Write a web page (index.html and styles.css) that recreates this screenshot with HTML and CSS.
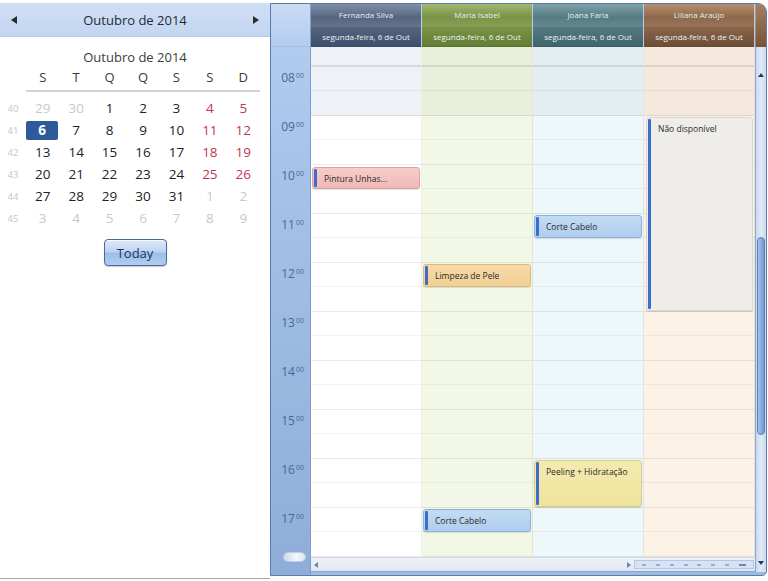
FILE: index.html
```html
<!DOCTYPE html>
<html lang="pt">
<head>
<meta charset="utf-8">
<title>Agenda</title>
<link rel="stylesheet" href="styles.css">
</head>
<body>
<div class="app">
  <aside class="nav">
    <div class="nav-head">
      <svg class="arrow" width="6" height="8" viewBox="0 0 6 8"><polygon points="6,0 6,8 0,4" fill="#2b2b2b"/></svg>
      <span class="nav-title">Outubro de 2014</span>
      <svg class="arrow" width="6" height="8" viewBox="0 0 6 8"><polygon points="0,0 0,8 6,4" fill="#2b2b2b"/></svg>
    </div>
    <div class="month-title">Outubro de 2014</div>
    <div class="cal">
      <div class="dow-row">
        <span>S</span><span>T</span><span>Q</span><span>Q</span><span>S</span><span>S</span><span>D</span>
      </div>
      <div class="week"><span class="wk">40</span><span class="d other">29</span><span class="d other">30</span><span class="d">1</span><span class="d">2</span><span class="d">3</span><span class="d we">4</span><span class="d we">5</span></div>
      <div class="week"><span class="wk">41</span><span class="d sel">6</span><span class="d">7</span><span class="d">8</span><span class="d">9</span><span class="d">10</span><span class="d we">11</span><span class="d we">12</span></div>
      <div class="week"><span class="wk">42</span><span class="d">13</span><span class="d">14</span><span class="d">15</span><span class="d">16</span><span class="d">17</span><span class="d we">18</span><span class="d we">19</span></div>
      <div class="week"><span class="wk">43</span><span class="d">20</span><span class="d">21</span><span class="d">22</span><span class="d">23</span><span class="d">24</span><span class="d we">25</span><span class="d we">26</span></div>
      <div class="week"><span class="wk">44</span><span class="d">27</span><span class="d">28</span><span class="d">29</span><span class="d">30</span><span class="d">31</span><span class="d other">1</span><span class="d other">2</span></div>
      <div class="week"><span class="wk">45</span><span class="d other">3</span><span class="d other">4</span><span class="d other">5</span><span class="d other">6</span><span class="d other">7</span><span class="d other">8</span><span class="d other">9</span></div>
    </div>
    <div class="today-wrap"><button class="today">Today</button></div>
  </aside>

  <section class="sched">
    <div class="times">
      <div class="corner"></div>
      <div class="t-pre"></div>
      <div class="t-hr">08<sup>00</sup></div>
      <div class="t-hr">09<sup>00</sup></div>
      <div class="t-hr">10<sup>00</sup></div>
      <div class="t-hr">11<sup>00</sup></div>
      <div class="t-hr">12<sup>00</sup></div>
      <div class="t-hr">13<sup>00</sup></div>
      <div class="t-hr">14<sup>00</sup></div>
      <div class="t-hr">15<sup>00</sup></div>
      <div class="t-hr">16<sup>00</sup></div>
      <div class="t-hr">17<sup>00</sup></div>
      <div class="zoom-pill"></div>
    </div>

    <div class="main">
      <div class="heads">
        <div class="res r-fern"><div class="res-name">Fernanda Silva</div><div class="res-date">segunda-feira, 6 de Out</div></div>
        <div class="res r-mari"><div class="res-name">Maria Isabel</div><div class="res-date">segunda-feira, 6 de Out</div></div>
        <div class="res r-joan"><div class="res-name">Joana Faria</div><div class="res-date">segunda-feira, 6 de Out</div></div>
        <div class="res r-lili"><div class="res-name">Liliana Araújo</div><div class="res-date">segunda-feira, 6 de Out</div></div>
      </div>
      <div class="cols">
        <div class="col c-fern">
          <div class="pre"></div>
          <div class="hr off"></div><div class="hr"></div><div class="hr"></div><div class="hr"></div><div class="hr"></div>
          <div class="hr"></div><div class="hr"></div><div class="hr"></div><div class="hr"></div><div class="hr"></div>
          <div class="appt pink" style="top:120px;height:22px">Pintura Unhas...</div>
        </div>
        <div class="col c-mari">
          <div class="pre"></div>
          <div class="hr off"></div><div class="hr"></div><div class="hr"></div><div class="hr"></div><div class="hr"></div>
          <div class="hr"></div><div class="hr"></div><div class="hr"></div><div class="hr"></div><div class="hr"></div>
          <div class="appt orange" style="top:217px;height:23px">Limpeza de Pele</div>
          <div class="appt blue" style="top:462px;height:23px">Corte Cabelo</div>
        </div>
        <div class="col c-joan">
          <div class="pre"></div>
          <div class="hr off"></div><div class="hr"></div><div class="hr"></div><div class="hr"></div><div class="hr"></div>
          <div class="hr"></div><div class="hr"></div><div class="hr"></div><div class="hr"></div><div class="hr"></div>
          <div class="appt blue" style="top:168px;height:23px">Corte Cabelo</div>
          <div class="appt yellow" style="top:413px;height:47px">Peeling + Hidratação</div>
        </div>
        <div class="col c-lili">
          <div class="pre"></div>
          <div class="hr off"></div><div class="hr"></div><div class="hr"></div><div class="hr"></div><div class="hr"></div>
          <div class="hr"></div><div class="hr"></div><div class="hr"></div><div class="hr"></div><div class="hr"></div>
          <div class="appt gray" style="top:70px;height:194px">Não disponível</div>
        </div>
      </div>
      <div class="hscroll">
        <svg class="h-left" width="4" height="6" viewBox="0 0 4 6"><polygon points="4,0 4,6 0,3" fill="#6c86ad"/></svg>
        <span class="h-track"></span>
        <svg class="h-right" width="4" height="6" viewBox="0 0 4 6"><polygon points="0,0 0,6 4,3" fill="#6c86ad"/></svg>
        <div class="zoombar">
          <span class="tick"></span><span class="tick"></span><span class="tick"></span><span class="tick"></span><span class="tick"></span><span class="tick"></span><span class="tick"></span><span class="tick wide"></span>
        </div>
      </div>
    </div>

    <div class="vbar">
      <div class="v-head"></div>
      <div class="v-track">
        <svg class="v-up" width="6" height="4" viewBox="0 0 6 4"><polygon points="0,4 6,4 3,0" fill="#1f3a66"/></svg>
        <div class="v-thumb"></div>
        <svg class="v-down" width="6" height="4" viewBox="0 0 6 4"><polygon points="0,0 6,0 3,4" fill="#1f3a66"/></svg>
      </div>
    </div>
  </section>
</div>
</body>
</html>
```

FILE: styles.css
```css
* { box-sizing: border-box; }
html, body { margin: 0; padding: 0; background: #fff; }
body { width: 768px; height: 581px; overflow: hidden; font-family: "Open Sans", "Noto Sans", sans-serif; }

.app { display: flex; align-items: flex-start; height: 581px; }

/* ---------- left navigator ---------- */
.nav {
  width: 270px;
  height: 579px;
  border-bottom: 1px solid #a5a5a5;
  background: #fff;
  display: flex;
  flex-direction: column;
}
.nav-head {
  margin-top: 3px;
  height: 34px;
  background: linear-gradient(#cfdff4, #c3d6f0);
  border-bottom: 1px solid #b7cbe6;
  display: flex;
  align-items: center;
  justify-content: space-between;
  padding: 0 11px 0 11px;
}
.nav-title { font-size: 13px; color: #1f2b3a; }
.arrow { display: block; }

.month-title {
  margin-top: 10px;
  text-align: center;
  font-size: 13px;
  line-height: 20px;
  color: #3b3b3b;
}
.cal { width: 260px; }
.dow-row {
  margin-left: 26px;
  height: 25px;
  display: grid;
  grid-template-columns: repeat(7, 1fr);
  border-bottom: 2px solid #d2d2d2;
  font-size: 13px;
  line-height: 20px;
  color: #3a3a3a;
  text-align: center;
}
.week {
  display: grid;
  grid-template-columns: 26px repeat(7, 1fr);
  height: 22px;
  align-items: center;
  text-align: center;
}
.week:first-of-type { margin-top: 0; }
.dow-row + .week { margin-top: 5px; }
.wk { font-size: 9.5px; color: #c5c5c5; }
.d { font-size: 13.5px; color: #222; line-height: 19px; height: 19px; }
.d.we { color: #c0394d; }
.d.other { color: #c9c9c9; }
.d.sel {
  background: #2c5a9b;
  color: #fff;
  font-weight: bold;
  border-radius: 2px;
  margin-right: 1px;
}

.today-wrap { display: flex; justify-content: center; margin-top: 10px; }
.today {
  width: 63px;
  height: 27px;
  padding: 0;
  font-family: "Open Sans", "Noto Sans", sans-serif;
  font-size: 13px;
  color: #1c355c;
  border: 1px solid #4a6898;
  border-radius: 4px;
  background: linear-gradient(#dde9fa 0%, #bcd3f3 48%, #9dbde9 52%, #b0cdf2 100%);
  box-shadow: inset 0 1px 0 #f4f8ff, 0 1px 1px rgba(0,0,0,.2);
}

/* ---------- scheduler ---------- */
.sched {
  margin-top: 3px;
  width: 497px;
  height: 573px;
  border: 1px solid #5a7bb0;
  border-radius: 0 9px 5px 0;
  background: #9fbbe2;
  display: flex;
  overflow: hidden;
}

.times {
  position: relative;
  width: 40px;
  flex: none;
  border-right: 1px solid #7d9fcf;
  background: linear-gradient(#b5cff1 0%, #a6c2e9 30%, #8fadd8 100%);
}
.corner {
  height: 43px;
  background: linear-gradient(#c9dbf3, #b3cdef);
  border-bottom: 1px solid #a2bfe6;
}
.t-pre { height: 20px; }
.t-hr {
  height: 49px;
  text-align: right;
  padding-right: 6px;
  font-size: 12px;
  line-height: 22px;
  color: #4a6896;
}
.t-hr sup { font-size: 7px; vertical-align: 0; position: relative; top: -4px; margin-left: 1px; }
.zoom-pill {
  position: absolute;
  left: 12px;
  top: 548px;
  width: 23px;
  height: 10px;
  border-radius: 5px;
  background: linear-gradient(90deg, #c9d9ef, #f4f8fd 60%, #dbe6f4);
  border: 1px solid #b9cbe6;
}

.main { width: 444px; flex: none; display: flex; flex-direction: column; }

.heads { display: flex; height: 43px; }
.res { width: 111px; border-right: 1px solid rgba(255,255,255,.25); display: flex; flex-direction: column; }
.res-name {
  height: 22px;
  line-height: 22px;
  font-size: 8px;
  text-align: center;
  color: #e6edf5;
  white-space: nowrap;
}
.res-date {
  height: 21px;
  line-height: 19px;
  font-size: 8px;
  text-align: center;
  color: #eef2f7;
  white-space: nowrap;
  border-top: 1px solid rgba(255,255,255,.2);
  border-bottom: 1px solid rgba(0,0,0,.25);
}
.r-fern .res-name { background: linear-gradient(#7f8da8 0%, #66758f 40%, #56647f 60%, #64728c 100%); }
.r-fern .res-date { background: linear-gradient(#55647f, #3f4e6a); }
.r-mari .res-name { background: linear-gradient(#a2b873 0%, #879f55 40%, #7a9447 60%, #869e53 100%); }
.r-mari .res-date { background: linear-gradient(#7a9346, #637f33); }
.r-joan .res-name { background: linear-gradient(#7fa2aa 0%, #63898f 40%, #557c84 60%, #618890 100%); }
.r-joan .res-date { background: linear-gradient(#55797f, #3f656d); }
.r-lili .res-name { background: linear-gradient(#b38e70 0%, #9c7656 40%, #8d6849 60%, #99735a 100%); }
.r-lili .res-date { background: linear-gradient(#8a6549, #6d4d36); }

.cols { display: flex; height: 510px; }
.col {
  position: relative;
  width: 111px;
  border-right: 1px solid rgba(0,0,0,.07);
  background: var(--work);
}
.c-fern { --work: #ffffff; --off: #eef1f5; }
.c-mari { --work: #f3f8e6; --off: #e8efda; }
.c-joan { --work: #eef7fa; --off: #e4edf0; }
.c-lili { --work: #fdf2e6; --off: #f5e8dc; }

.pre { height: 20px; background: var(--off); border-bottom: 2px solid rgba(0,0,0,.1); }
.hr {
  position: relative;
  height: 49px;
  border-bottom: 1px solid rgba(0,0,0,.085);
}
.hr::after {
  content: "";
  position: absolute;
  left: 0; right: 0;
  top: 23px;
  height: 1px;
  background: rgba(0,0,0,.05);
}
.hr.off { background: var(--off); }

.appt {
  position: absolute;
  left: 1px;
  right: 1px;
  border: 1px solid;
  border-radius: 3px;
  padding: 4px 0 0 11px;
  font-size: 8.5px;
  line-height: 13px;
  color: #2a2a2a;
  white-space: nowrap;
  overflow: hidden;
  box-shadow: 0 1px 1px rgba(0,0,0,.12);
}
.appt::before {
  content: "";
  position: absolute;
  left: 1px;
  top: 1px;
  bottom: 1px;
  width: 3px;
  border-radius: 1px;
  background: #3c6dcc;
}
.pink   { background: linear-gradient(#f7cdcb, #f0b8b6); border-color: #dba3a1; }
.blue   { background: linear-gradient(#c3dcf4, #afcdee); border-color: #8fb2dc; }
.orange { background: linear-gradient(#f7dba8, #f1cf95); border-color: #dcb97f; }
.yellow { background: linear-gradient(#f4eab0, #efe39c); border-color: #d9cd8a; }
.gray   { background: #efedea; border-color: #dad7d2; left: 2px; }

.hscroll {
  height: 15px;
  display: flex;
  align-items: center;
  background: linear-gradient(#eef2f8, #dfe7f2);
  border-top: 1px solid #cfd9e7;
  border-bottom: 1px solid #8aa6cf;
  padding-left: 3px;
}
.h-left { flex: none; }
.h-track { flex: 1; }
.h-right { flex: none; margin-right: 3px; }
.zoombar {
  width: 120px;
  height: 9px;
  margin-right: 1px;
  background: #d7e3f3;
  border: 1px solid #b3c7e3;
  display: flex;
  align-items: center;
  justify-content: space-around;
  padding: 0 2px;
}
.tick { width: 4px; height: 2px; background: #98aed0; }
.tick.wide { width: 7px; background: #6f88b3; }

.vbar { width: 11px; flex: none; display: flex; flex-direction: column; }
.v-head { height: 43px; background: linear-gradient(#a47f62 0%, #8e6a4d 50%, #765439 100%); border-left: 1px solid rgba(255,255,255,.25); }
.v-track {
  position: relative;
  height: 525px;
  background: linear-gradient(90deg, #c9d9ee, #e1eaf6 50%, #cbdaee);
  border-left: 1px solid #8aa7d0;
}
.v-up { position: absolute; left: 2px; top: 26px; }
.v-down { position: absolute; left: 2px; top: 514px; }
.v-thumb {
  position: absolute;
  left: 1px;
  top: 190px;
  width: 8px;
  height: 198px;
  border-radius: 4px;
  border: 1px solid #5a7fb8;
  background: linear-gradient(90deg, #a6c2ea, #86a8dc 60%, #7698cf);
}
```
